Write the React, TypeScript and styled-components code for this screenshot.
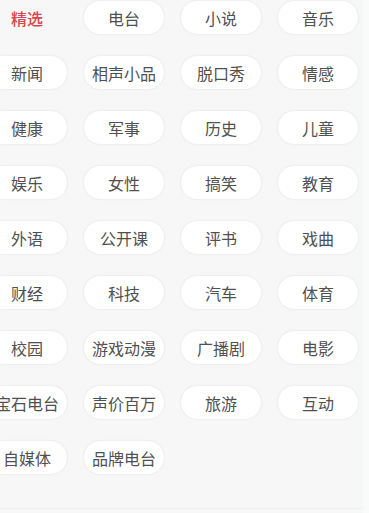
import React from "react";
import styled, { createGlobalStyle } from "styled-components";

const GlobalStyle = createGlobalStyle`
  html, body {
    margin: 0;
    padding: 0;
    background: #f7f7f7;
  }
  body {
    font-family: "Noto Sans CJK SC", "Noto Sans", sans-serif;
  }
`;

const Page = styled.div`
  width: 369px;
  height: 513px;
  overflow: hidden;
  display: flex;
  background: #f7f7f7;
`;

const Main = styled.div`
  flex: 1;
  overflow: hidden;
  border-bottom: 1px solid #efefef;
  height: 508px;
`;

const SideStrip = styled.div`
  width: 6px;
  background: #f9fafa;
`;

const Grid = styled.div`
  display: grid;
  grid-template-columns: repeat(4, 82px);
  grid-auto-rows: 35px;
  column-gap: 15px;
  row-gap: 20px;
  margin-left: -14px;
`;

const Tag = styled.div<{ $active?: boolean }>`
  display: flex;
  align-items: center;
  justify-content: center;
  border-radius: 18px;
  box-sizing: border-box;
  font-size: 16px;
  line-height: 1;
  white-space: nowrap;
  color: ${(p) => (p.$active ? "#d9464b" : "#505050")};
  font-weight: ${(p) => (p.$active ? 500 : 400)};
  background: ${(p) => (p.$active ? "transparent" : "#ffffff")};
  border: 1px solid ${(p) => (p.$active ? "transparent" : "#efefef")};
  box-shadow: ${(p) => (p.$active ? "none" : "0 0 2px rgba(0,0,0,0.03)")};
`;

const tags = [
  "精选", "电台", "小说", "音乐",
  "新闻", "相声小品", "脱口秀", "情感",
  "健康", "军事", "历史", "儿童",
  "娱乐", "女性", "搞笑", "教育",
  "外语", "公开课", "评书", "戏曲",
  "财经", "科技", "汽车", "体育",
  "校园", "游戏动漫", "广播剧", "电影",
  "宝石电台", "声价百万", "旅游", "互动",
  "自媒体", "品牌电台",
];

export default function App() {
  return (
    <>
      <GlobalStyle />
      <Page>
        <Main>
          <Grid>
            {tags.map((t, i) => (
              <Tag key={t} $active={i === 0}>
                {t}
              </Tag>
            ))}
          </Grid>
        </Main>
        <SideStrip />
      </Page>
    </>
  );
}
